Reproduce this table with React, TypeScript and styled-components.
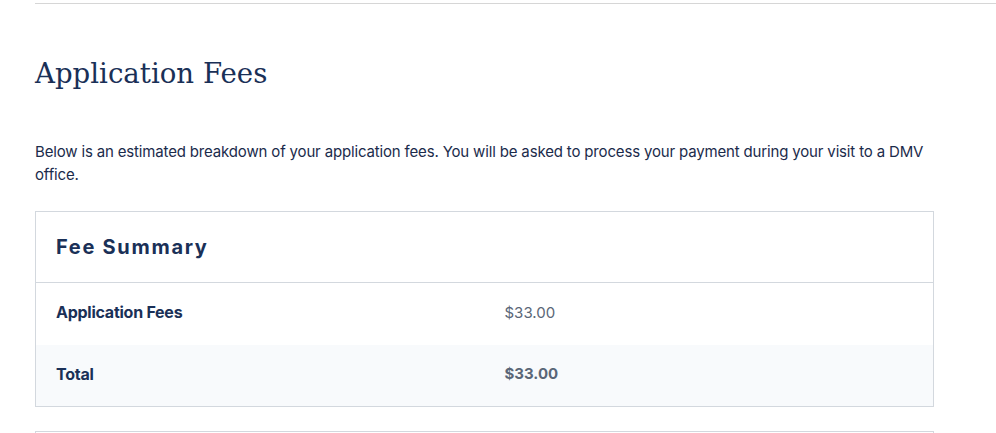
import React from "react";
import styled, { createGlobalStyle } from "styled-components";

const GlobalStyle = createGlobalStyle`
  html, body { margin: 0; padding: 0; background: #ffffff; }
  body { font-family: "Inter", "Liberation Sans", sans-serif; color: #1b2b4b; }
  * { box-sizing: border-box; }
`;

const Page = styled.div`
  padding: 3px 0 0 35px;
`;

const Divider = styled.hr`
  margin: 0;
  border: 0;
  border-top: 1px solid #d6d6d6;
`;

const Content = styled.div`
  width: 899px;
`;

const Title = styled.h1`
  margin: 51px 0 0;
  font-family: "DejaVu Serif", "Liberation Serif", serif;
  font-weight: 400;
  font-size: 27.6px;
  line-height: 38px;
  color: #1a3057;
`;

const Intro = styled.p`
  margin: 47px 0 0;
  font-size: 15px;
  line-height: 23px;
  letter-spacing: -0.16px;
  color: #1b2b4b;
`;

const Card = styled.div`
  margin-top: 25px;
  border: 1px solid #d3d8de;
`;

const CardHeader = styled.div`
  height: 71px;
  display: flex;
  align-items: center;
  padding: 0 20px;
  border-bottom: 1px solid #d3d8de;
`;

const CardTitle = styled.h2`
  margin: 0;
  font-size: 20px;
  font-weight: 700;
  letter-spacing: 1.7px;
  color: #1a3057;
`;

const FeeTable = styled.table`
  width: 100%;
  border-collapse: collapse;
`;

const Row = styled.tr<{ $shaded?: boolean }>`
  background: ${(p) => (p.$shaded ? "#f8fafc" : "#ffffff")};
`;

const Label = styled.td<{ $h: number }>`
  width: 50%;
  height: ${(p) => p.$h}px;
  padding: 0 20px 4px;
  font-size: 16px;
  font-weight: 700;
  letter-spacing: -0.25px;
  color: #1a3057;
  vertical-align: middle;
`;

const Value = styled.td<{ $bold?: boolean }>`
  width: 50%;
  padding: 0 20px 4px;
  font-size: 15px;
  font-weight: ${(p) => (p.$bold ? 700 : 400)};
  color: #5a6677;
  vertical-align: middle;
`;

const NextCard = styled.div`
  margin-top: 24px;
  height: 40px;
  border: 1px solid #d3d8de;
`;

export default function App() {
  return (
    <>
      <GlobalStyle />
      <Page>
        <Divider />
        <Content>
          <Title>Application Fees</Title>
          <Intro>
            Below is an estimated breakdown of your application fees. You will be asked to
            process your payment during your visit to a DMV office.
          </Intro>
          <Card>
            <CardHeader>
              <CardTitle>Fee Summary</CardTitle>
            </CardHeader>
            <FeeTable>
              <tbody>
                <Row>
                  <Label $h={62}>Application Fees</Label>
                  <Value>$33.00</Value>
                </Row>
                <Row $shaded>
                  <Label $h={61}>Total</Label>
                  <Value $bold>$33.00</Value>
                </Row>
              </tbody>
            </FeeTable>
          </Card>
          <NextCard />
        </Content>
      </Page>
    </>
  );
}
